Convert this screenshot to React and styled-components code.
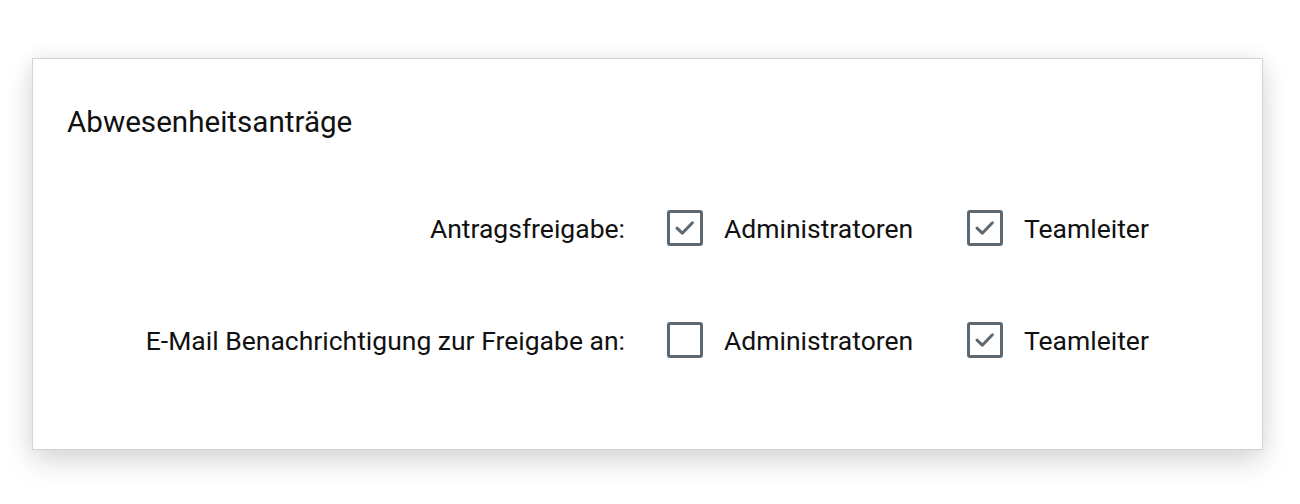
import React from 'react';
import styled, { createGlobalStyle } from 'styled-components';

const GlobalStyle = createGlobalStyle`
	body {
		margin: 0;
		background: #ffffff;
		font-family: Roboto, 'Liberation Sans', sans-serif;
	}
`;

const rows = [
	{ label: 'Antragsfreigabe:', admin: true, lead: true },
	{ label: 'E-Mail Benachrichtigung zur Freigabe an:', admin: false, lead: true },
];

function CheckIcon () {
	return (
		<svg width="30" height="30" viewBox="0 0 30 30" fill="none">
			<path d="M7 15.2 L12.3 20.2 L22.4 9.8" stroke="#5d6870" strokeWidth="3" strokeLinecap="round" strokeLinejoin="round"/>
		</svg>
	);
}

function Option ({ checked, children }) {
	return (
		<OptionLabel>
			<Box>{checked && <CheckIcon/>}</Box>
			<span>{children}</span>
		</OptionLabel>
	);
}

export default function App () {
	return (
		<>
			<GlobalStyle/>
			<Page>
				<Card>
					<Title>Abwesenheitsanträge</Title>
					<Settings>
						{rows.map(row => (
							<React.Fragment key={row.label}>
								<RowLabel>{row.label}</RowLabel>
								<Option checked={row.admin}>Administratoren</Option>
								<Option checked={row.lead}>Teamleiter</Option>
							</React.Fragment>
						))}
					</Settings>
				</Card>
			</Page>
		</>
	);
}

const Page = styled.div`
	padding: 58px 37px 54px 32px;
`;

const Card = styled.div`
	background: #ffffff;
	border: 1px solid #d4d4d4;
	box-shadow: 0 12px 28px rgba(0, 0, 0, 0.14), 0 0 20px rgba(0, 0, 0, 0.06);
	padding: 46px 34px 52px;
	height: 392px;
	box-sizing: border-box;
`;

const Title = styled.h2`
	margin: 0;
	font-size: 29.6px;
	font-weight: 400;
	color: #111111;
	line-height: 34px;
`;

const Settings = styled.div`
	display: grid;
	grid-template-columns: 558px 258px 258px;
	column-gap: 42px;
	row-gap: 76px;
	align-items: center;
	margin-top: 71px;
`;

const RowLabel = styled.div`
	text-align: right;
	font-size: 26.5px;
	color: #111111;
`;

const OptionLabel = styled.label`
	display: flex;
	align-items: center;
	gap: 21px;
	font-size: 26.5px;
	color: #111111;
`;

const Box = styled.span`
	width: 36px;
	height: 36px;
	flex-shrink: 0;
	box-sizing: border-box;
	border: 3px solid #5d6870;
	border-radius: 3px;
	display: flex;
	align-items: center;
	justify-content: center;
`;
